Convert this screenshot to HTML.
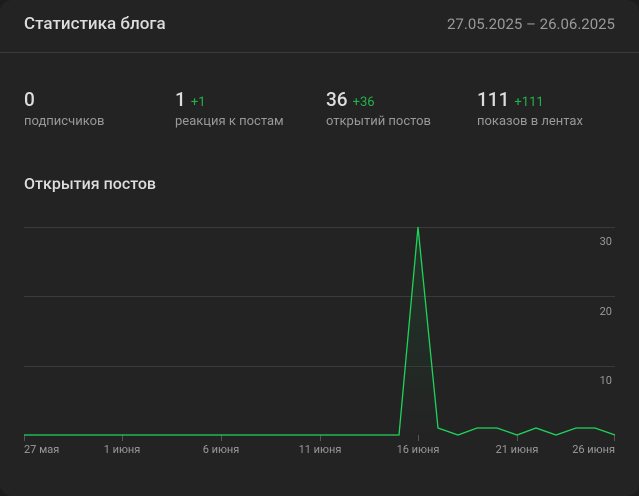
<!DOCTYPE html>
<html><head><meta charset="utf-8"><style>
html,body{margin:0;padding:0;background:#1c1c1c;width:639px;height:496px;overflow:hidden}
.card{position:absolute;left:0;top:0;width:639px;height:496px;background:#232323;border-radius:12px;font-family:"Roboto","Liberation Sans",sans-serif;color:#e6e6e6}
.t{position:absolute;white-space:nowrap}
.hd{left:24px;top:14px;font-size:17px;color:#ddd;font-weight:500}
.dt{right:24px;top:15px;font-size:15px;color:#999}
.div{position:absolute;left:0;right:0;top:52px;height:1px;background:#3a3a3a}
.n{font-size:19px;color:#ddd;top:88px;font-weight:500}
.n small{font-size:13px;color:#22b24c;margin-left:5px;font-weight:400}
.l{font-size:13px;color:#999;top:114px}
.ct{left:24px;top:174px;font-size:16px;color:#ddd;font-weight:500}
svg{position:absolute;left:0;top:0}
</style></head><body><div class="card">
<div class="t hd">Статистика блога</div>
<div class="t dt">27.05.2025 – 26.06.2025</div>
<div class="div"></div>
<div class="t n" style="left:24px">0</div><div class="t l" style="left:24px">подписчиков</div>
<div class="t n" style="left:175px">1<small>+1</small></div><div class="t l" style="left:175px">реакция к постам</div>
<div class="t n" style="left:326px">36<small>+36</small></div><div class="t l" style="left:326px">открытий постов</div>
<div class="t n" style="left:477px">111<small>+111</small></div><div class="t l" style="left:477px">показов в лентах</div>
<div class="t ct">Открытия постов</div>
<svg width="639" height="496">
<defs><linearGradient id="g" x1="0" y1="0" x2="0" y2="1"><stop offset="0" stop-color="#1f5a33" stop-opacity=".35"/><stop offset="1" stop-color="#1f5a33" stop-opacity="0"/></linearGradient></defs>
<g stroke="#3a3a3a" stroke-width="1">
<line x1="24" y1="227.5" x2="615" y2="227.5"/><line x1="24" y1="296.5" x2="615" y2="296.5"/><line x1="24" y1="366.5" x2="615" y2="366.5"/>
</g>
<g stroke="#555" stroke-width="1">
<line x1="24.5" y1="435" x2="24.5" y2="441"/><line x1="122.5" y1="435" x2="122.5" y2="441"/><line x1="221.5" y1="435" x2="221.5" y2="441"/><line x1="320.5" y1="435" x2="320.5" y2="441"/><line x1="418.5" y1="435" x2="418.5" y2="441"/><line x1="517.5" y1="435" x2="517.5" y2="441"/><line x1="614.5" y1="435" x2="614.5" y2="441"/>
</g>
<polygon fill="url(#g)" points="399,435 418,227 438,428 458,435 477,428 497,428 517,435 536,428 556,435 576,428 595,428 615,435"/>
<polyline fill="none" stroke="#1fd35a" stroke-width="1.3" points="24,435 399,435 418,227 438,428 458,435 477,428 497,428 517,435 536,428 556,435 576,428 595,428 615,435"/>
<g font-family="Roboto,Liberation Sans,sans-serif" font-size="11" fill="#999">
<text x="612" y="245" text-anchor="end">30</text><text x="612" y="315" text-anchor="end">20</text><text x="612" y="384" text-anchor="end">10</text>
<text x="24" y="453">27 мая</text>
<text x="122" y="453" text-anchor="middle">1 июня</text>
<text x="221" y="453" text-anchor="middle">6 июня</text>
<text x="320" y="453" text-anchor="middle">11 июня</text>
<text x="418" y="453" text-anchor="middle">16 июня</text>
<text x="517" y="453" text-anchor="middle">21 июня</text>
<text x="615" y="453" text-anchor="end">26 июня</text>
</g>
</svg>
</div></body></html>
